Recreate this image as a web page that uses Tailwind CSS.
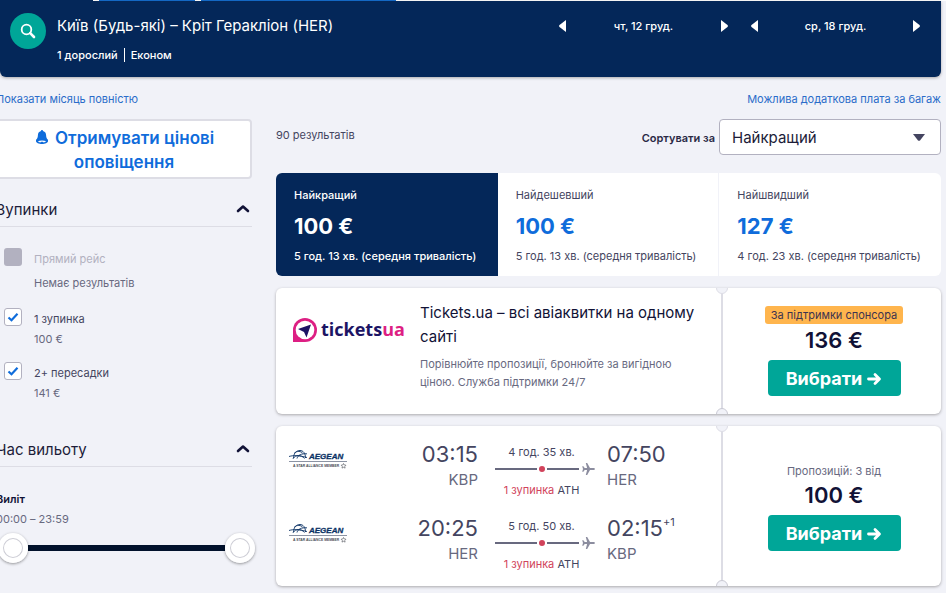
<!DOCTYPE html>
<html lang="uk">
<head>
<meta charset="utf-8">
<meta name="viewport" content="width=device-width, initial-scale=1">
<title>Київ – Кріт Геракліон</title>
<script src="https://cdn.jsdelivr.net/npm/@tailwindcss/browser@4"></script>
</head>
<body class="min-h-screen overflow-x-hidden bg-[#f1f2f8] font-['Inter','Liberation_Sans',sans-serif] text-[12px] leading-4 text-[#444560]">
<svg class="hidden" aria-hidden="true">
  <symbol id="aegean" viewBox="0 0 58 20">
    <g fill="none" stroke="#0b3265" stroke-width=".9">
      <path d="M0 7.500C5 6 10 6.500 18 8.500M4.500 9.500C4.500 4 7.500 1.500 11 1.500C14 1.500 16.500 4 16.500 9M5 4.500C8 1.500 12 2 14 4.500M8 9.500C9 6 12 4.500 18 4.800M4 9.500C7 5.500 12 5.500 15.500 9.500"/>
    </g>
    <text x="20" y="10" font-family="Liberation Sans, sans-serif" font-size="8" font-weight="700" font-style="italic" fill="#0b3265" stroke="#0b3265" stroke-width=".3">AEGEAN</text>
    <path d="M0 12.500H58" stroke="#8b93a3" stroke-width="1"/>
    <text x="4" y="18" font-family="Liberation Sans, sans-serif" font-size="3.400" font-weight="700" fill="#4b4f58">A STAR ALLIANCE MEMBER</text>
    <path d="M54.500 14.500l.8 1.500 1.700.2-1.200 1.200.3 1.700-1.600-.8-1.500.8.3-1.700-1.200-1.200 1.700-.2z" fill="none" stroke="#4b4f58" stroke-width=".6"/>
  </symbol>
  <symbol id="route" viewBox="0 0 107 14">
    <path d="M7 7H49M59 7H91" stroke="#68697f" stroke-width="2"/>
    <circle cx="54" cy="7" r="3" fill="#d1435b"/>
    <path fill="#8c8d9f" d="M107 7c0-.8-1-1.100-2-1.100h-3L99.200 1h-1.400l1.300 4.900h-2.400L95.400 4.200h-1.200L95 7l-.8 2.800h1.200l1.300-1.700h2.400L97.800 13h1.400l2.800-4.900h3c1 0 2-.3 2-1.100z"/>
  </symbol>
  <symbol id="arrow" viewBox="0 0 16 16">
    <path d="M2.500 8H13M9 3.500L13.500 8L9 12.500" fill="none" stroke="currentColor" stroke-width="2.800" stroke-linecap="round" stroke-linejoin="round"/>
  </symbol>
  <symbol id="chevron" viewBox="0 0 14 10">
    <path d="M2 7L7 2.500L12 7" fill="none" stroke="currentColor" stroke-width="2.600" stroke-linecap="round" stroke-linejoin="round"/>
  </symbol>
  <symbol id="check" viewBox="0 0 18 18">
    <path d="M4.500 9.500L7.500 12.200L13.500 5.800" fill="none" stroke="currentColor" stroke-width="2.200"/>
  </symbol>
</svg>

<div class="mr-[5px]">
  <div class="-mr-[5px] flex h-px bg-white">
    <span class="w-[93px] bg-[#042759]"></span>
    <span class="ml-[6px] w-[96px] bg-[#1468c4]"></span>
    <span class="ml-[6px] w-[195px] bg-[#1468c4]"></span>
  </div>
  <header class="flex h-[76px] justify-between rounded-b-[6px] bg-[#042759] pr-[21px] pl-[10px] text-white shadow-[0_1px_3px_rgba(37,32,31,0.35)]">
    <div class="flex gap-[11px] pt-3">
      <button class="grid size-9 place-items-center rounded-full bg-[#00a698]" aria-label="Пошук">
        <svg class="size-4" viewBox="0 0 16 16" fill="none" stroke="white" stroke-width="1.800"><circle cx="6.500" cy="6.500" r="4.800"/><path d="M10.200 10.200L14 14" stroke-width="2.600" stroke-linecap="round"/></svg>
      </button>
      <div>
        <h1 class="pt-px text-[15px] leading-6">Київ (Будь-які) – Кріт Геракліон (HER)</h1>
        <p class="mt-2 flex text-[11px] leading-[18px] font-medium"><span class="pr-[6px]">1 дорослий</span><span class="my-[2px] border-l border-white"></span><span class="pl-[6px]">Економ</span></p>
      </div>
    </div>
    <div class="flex items-start gap-[23px] pt-4 text-[11px] font-medium">
      <div class="flex w-[169px] items-center justify-between">
        <button aria-label="Попередній день"><svg class="block h-4 w-[7px]" viewBox="0 0 7 16" fill="white"><path d="M7 2v12L.5 9Q-.3 8 .5 7z"/></svg></button>
        <span class="pt-px">чт, 12 груд.</span>
        <button aria-label="Наступний день"><svg class="block h-4 w-[7px]" viewBox="0 0 7 16" fill="white"><path d="M0 2v12L6.500 9Q7.300 8 6.500 7z"/></svg></button>
      </div>
      <div class="flex w-[169px] items-center justify-between">
        <button aria-label="Попередній день"><svg class="block h-4 w-[7px]" viewBox="0 0 7 16" fill="white"><path d="M7 2v12L.5 9Q-.3 8 .5 7z"/></svg></button>
        <span class="pt-px">ср, 18 груд.</span>
        <button aria-label="Наступний день"><svg class="block h-4 w-[7px]" viewBox="0 0 7 16" fill="white"><path d="M0 2v12L6.500 9Q7.300 8 6.500 7z"/></svg></button>
      </div>
    </div>
  </header>

  <div class="-ml-1">
    <nav class="flex justify-between pt-[14px] text-[11px] text-[#2a6cc9]">
      <a href="#">Показати місяць повністю</a>
      <a href="#">Можлива додаткова плата за багаж</a>
    </nav>

    <div class="mt-3 flex gap-6">
      <aside class="w-[256px] shrink-0">
        <button class="h-[60px] w-full rounded-[4px] border-2 border-[#dddde5] bg-white pt-px text-[17px] leading-6 font-semibold text-[#0f6cdb]">
          <svg class="mr-px inline size-4 align-[-1px]" viewBox="0 0 16 16"><path fill="currentColor" d="M8 1c.7 0 1 .5 1 1 2.200.6 3 2.300 3.100 4.300.1 2.200.7 3.500 1.900 4.500v1.400C14 13.800 11 15 8 15s-6-1.200-6-2.800v-1.400c1.200-1 1.800-2.300 1.900-4.500C4 4.300 4.800 2.600 7 2c0-.5.300-1 1-1z"/><path fill="white" d="M3.800 12.300c2.200-1 6.200-1 8.400 0-.8.700-1.800 1-2.500 1.100-.3-.9-3.100-.9-3.400 0-.8-.1-1.800-.4-2.500-1.100z"/></svg>
          Отримувати цінові оповіщення
        </button>

        <section>
          <h2 class="mt-[18px] flex items-center justify-between border-b border-[#dddde5] pr-[2px] pb-1 text-[15px] leading-[25px] text-[#1c1c38]">Зупинки
            <button aria-label="Згорнути"><svg class="mb-[2px] h-[10px] w-[14px] text-[#111236]"><use href="#chevron"/></svg></button>
          </h2>
          <div class="flex flex-col gap-[14px] pt-5 pl-2 text-[11px] leading-5">
            <label class="flex gap-3">
              <span class="mt-px grid size-[18px]"><input type="checkbox" disabled class="size-[18px] appearance-none rounded-[3px] bg-[#b2b1c0]"></span>
              <span class="pt-[2px]"><span class="block text-[#b2b1c0]">Прямий рейс</span><span class="mt-1 block text-[#68697f]">Немає результатів</span></span>
            </label>
            <label class="flex gap-3">
              <span class="mt-px grid size-[18px]"><input type="checkbox" checked class="peer col-start-1 row-start-1 size-[18px] appearance-none rounded-[3px] border border-[#b2b1c0] bg-white"><svg class="invisible col-start-1 row-start-1 size-[18px] text-[#0f6cdb] peer-checked:visible"><use href="#check"/></svg></span>
              <span class="pt-[2px]"><span class="block">1 зупинка</span><span class="block text-[#68697f]">100 €</span></span>
            </label>
            <label class="-mt-[2px] flex gap-3">
              <span class="mt-px grid size-[18px]"><input type="checkbox" checked class="peer col-start-1 row-start-1 size-[18px] appearance-none rounded-[3px] border border-[#b2b1c0] bg-white"><svg class="invisible col-start-1 row-start-1 size-[18px] text-[#0f6cdb] peer-checked:visible"><use href="#check"/></svg></span>
              <span class="pt-[2px]"><span class="block">2+ пересадки</span><span class="block text-[#68697f]">141 €</span></span>
            </label>
          </div>
        </section>

        <section>
          <h2 class="mt-[34px] flex items-center justify-between border-b border-[#dddde5] pr-[2px] pb-1 text-[15px] leading-[25px] text-[#1c1c38]">Час вильоту
            <button aria-label="Згорнути"><svg class="mb-[2px] h-[10px] w-[14px] text-[#111236]"><use href="#chevron"/></svg></button>
          </h2>
          <h3 class="mt-[22px] text-[11px] leading-5 font-semibold text-[#111236]">Виліт</h3>
          <p class="text-[11px] leading-5 text-[#68697f]">00:00 – 23:59</p>
          <div class="relative mt-1 -mr-[3px] ml-[2px] h-[30px]">
            <div class="absolute inset-x-4 top-[12px] h-[6px] bg-[#02122c]"></div>
            <input type="range" min="0" max="24" value="0" aria-label="Виліт від" class="pointer-events-none absolute inset-0 h-[30px] w-full appearance-none bg-transparent [&::-webkit-slider-thumb]:pointer-events-auto [&::-webkit-slider-thumb]:size-[30px] [&::-webkit-slider-thumb]:appearance-none [&::-webkit-slider-thumb]:rounded-full [&::-webkit-slider-thumb]:bg-white [&::-webkit-slider-thumb]:shadow-[inset_0_0_0_5px_#fff,inset_0_0_0_6px_#ceced6,0_1px_3px_rgba(0,0,0,0.4)]">
            <input type="range" min="0" max="24" value="24" aria-label="Виліт до" class="pointer-events-none absolute inset-0 h-[30px] w-full appearance-none bg-transparent [&::-webkit-slider-thumb]:pointer-events-auto [&::-webkit-slider-thumb]:size-[30px] [&::-webkit-slider-thumb]:appearance-none [&::-webkit-slider-thumb]:rounded-full [&::-webkit-slider-thumb]:bg-white [&::-webkit-slider-thumb]:shadow-[inset_0_0_0_5px_#fff,inset_0_0_0_6px_#ceced6,0_1px_3px_rgba(0,0,0,0.4)]">
          </div>
        </section>
      </aside>

      <main class="flex min-w-0 flex-1 flex-col">
        <div class="flex h-9 items-center">
          <p class="flex-1 pb-1 text-[11px]">90 результатів</p>
          <label for="sort" class="pt-[2px] pr-1 text-[11px] font-semibold text-[#2a2a45]">Сортувати за</label>
          <div class="grid w-[222px] items-center">
            <select id="sort" class="col-start-1 row-start-1 h-9 w-full appearance-none rounded-[4px] border border-[#b2b1c0] bg-white px-3 pt-[2px] text-[15px] text-[#1c1c38]"><option>Найкращий</option><option>Найдешевший</option><option>Найшвидший</option></select>
            <svg class="pointer-events-none col-start-1 row-start-1 mr-4 h-[7px] w-3 justify-self-end" viewBox="0 0 12 7" fill="#444560"><path d="M0 0h12L7 6.500Q6 7.200 5 6.500z"/></svg>
          </div>
        </div>

        <div class="mt-[18px] grid h-[103px] grid-cols-3 overflow-hidden rounded-[6px] bg-white text-left text-[11px]">
          <button class="flex flex-col items-start bg-[#042759] pt-[14px] pl-[18px] font-medium text-white">
            <span>Найкращий</span><span class="mt-2 text-[22px] leading-[30px] font-bold">100 €</span><span class="mt-[7px] whitespace-nowrap">5 год. 13 хв. (середня тривалість)</span>
          </button>
          <button class="flex flex-col items-start border-r border-[#f1f2f8] pt-[14px] pl-[18px]">
            <span>Найдешевший</span><span class="mt-2 text-[22px] leading-[30px] font-bold text-[#0f6cdb]">100 €</span><span class="mt-[7px] whitespace-nowrap">5 год. 13 хв. (середня тривалість)</span>
          </button>
          <button class="flex flex-col items-start pt-[14px] pl-[18px]">
            <span>Найшвидший</span><span class="mt-2 text-[22px] leading-[30px] font-bold text-[#0f6cdb]">127 €</span><span class="mt-[7px] whitespace-nowrap">4 год. 23 хв. (середня тривалість)</span>
          </button>
        </div>

        <article class="relative mt-3 flex min-h-[126px] overflow-hidden rounded-[6px] bg-white shadow-[0_1px_3px_rgba(37,32,31,0.35)]">
          <div class="flex flex-1 pt-[13px] pr-4 pl-4">
            <svg class="mt-4 h-[26px] w-[128px] shrink-0" viewBox="0 0 128 26" role="img" aria-label="ticketsua">
              <path d="M1 25V13A12 12 0 1 1 13 25z" fill="#dd1f83"/><circle cx="13" cy="13" r="9.300" fill="white"/><path d="M19 7.500L14.500 20.500L12 15L6 12z" fill="#1c1464"/>
              <text x="29" y="19" font-family="Open Sans, sans-serif" font-size="18" font-weight="700" fill="#1c1464">tickets<tspan fill="#dd1f83">ua</tspan></text>
            </svg>
            <div>
              <h3 class="text-[15px] leading-6 text-[#111236]">Tickets.ua – всі авіаквитки на одному сайті</h3>
              <p class="mt-[6px] text-[11px] leading-[18px] text-[#68697f]">Порівнюйте пропозиції, бронюйте за вигідною ціною. Служба підтримки 24/7</p>
            </div>
          </div>
          <div class="flex w-[220px] shrink-0 flex-col items-center border-l-2 border-[#dddde5] pt-[18px] pl-1">
            <span class="rounded-[3px] bg-[#ffb54d] px-[6px] pt-px text-[11px] leading-[17px] text-[#3d3350]">За підтримки спонсора</span>
            <span class="mt-[2px] text-[22px] leading-7 font-semibold text-[#111236]">136 €</span>
            <button class="mt-[6px] flex h-9 w-[133px] items-center justify-center gap-1 rounded-[4px] bg-[#00a698] pt-px text-[18px] font-bold text-white">Вибрати <svg class="size-4"><use href="#arrow"/></svg></button>
          </div>
          <i class="absolute -top-[6px] right-[213px] size-3 rounded-full border border-[#dddde5] bg-[#f1f2f8]"></i>
          <i class="absolute right-[213px] -bottom-[6px] size-3 rounded-full border border-[#c9c9d3] bg-[#f1f2f8]"></i>
        </article>

        <article class="relative mt-3 flex min-h-[160px] overflow-hidden rounded-[6px] bg-white shadow-[0_1px_3px_rgba(37,32,31,0.35)]">
          <div class="flex flex-1 flex-col gap-4 pt-[14px] pl-[13px]">
            <div class="flex items-start">
              <svg class="mt-[9px] h-5 w-[58px]" role="img" aria-label="Aegean"><use href="#aegean"/></svg>
              <div class="w-[131px] text-right"><p class="text-[22px] leading-7">03:15</p><p class="text-[15px] leading-6 text-[#68697f]">KBP</p></div>
              <div class="ml-[10px] w-[107px] pt-1 text-center text-[11px]"><p>4 год. 35 хв.</p><svg class="mt-[2px] block h-[14px] w-full"><use href="#route"/></svg><p class="mt-[6px]"><span class="text-[#d1435b]">1 зупинка</span> ATH</p></div>
              <div class="ml-3"><p class="text-[22px] leading-7">07:50</p><p class="text-[15px] leading-6 text-[#68697f]">HER</p></div>
            </div>
            <div class="flex items-start">
              <svg class="mt-[9px] h-5 w-[58px]" role="img" aria-label="Aegean"><use href="#aegean"/></svg>
              <div class="w-[131px] text-right"><p class="text-[22px] leading-7">20:25</p><p class="text-[15px] leading-6 text-[#68697f]">HER</p></div>
              <div class="ml-[10px] w-[107px] pt-1 text-center text-[11px]"><p>5 год. 50 хв.</p><svg class="mt-[2px] block h-[14px] w-full"><use href="#route"/></svg><p class="mt-[6px]"><span class="text-[#d1435b]">1 зупинка</span> ATH</p></div>
              <div class="ml-3"><p class="flex text-[22px] leading-7">02:15<span class="text-[11px] leading-4">+1</span></p><p class="text-[15px] leading-6 text-[#68697f]">KBP</p></div>
            </div>
          </div>
          <div class="flex w-[220px] shrink-0 flex-col items-center border-l-2 border-[#dddde5] pt-9 pl-1">
            <span class="text-[11px] leading-[18px] text-[#68697f]">Пропозицій: 3 від</span>
            <span class="mt-px text-[22px] leading-7 font-semibold text-[#111236]">100 €</span>
            <button class="mt-[6px] flex h-9 w-[133px] items-center justify-center gap-1 rounded-[4px] bg-[#00a698] pt-px text-[18px] font-bold text-white">Вибрати <svg class="size-4"><use href="#arrow"/></svg></button>
          </div>
          <i class="absolute -top-[6px] right-[213px] size-3 rounded-full border border-[#dddde5] bg-[#f1f2f8]"></i>
          <i class="absolute right-[213px] -bottom-[6px] size-3 rounded-full border border-[#c9c9d3] bg-[#f1f2f8]"></i>
        </article>
      </main>
    </div>
  </div>
</div>
</body>
</html>
